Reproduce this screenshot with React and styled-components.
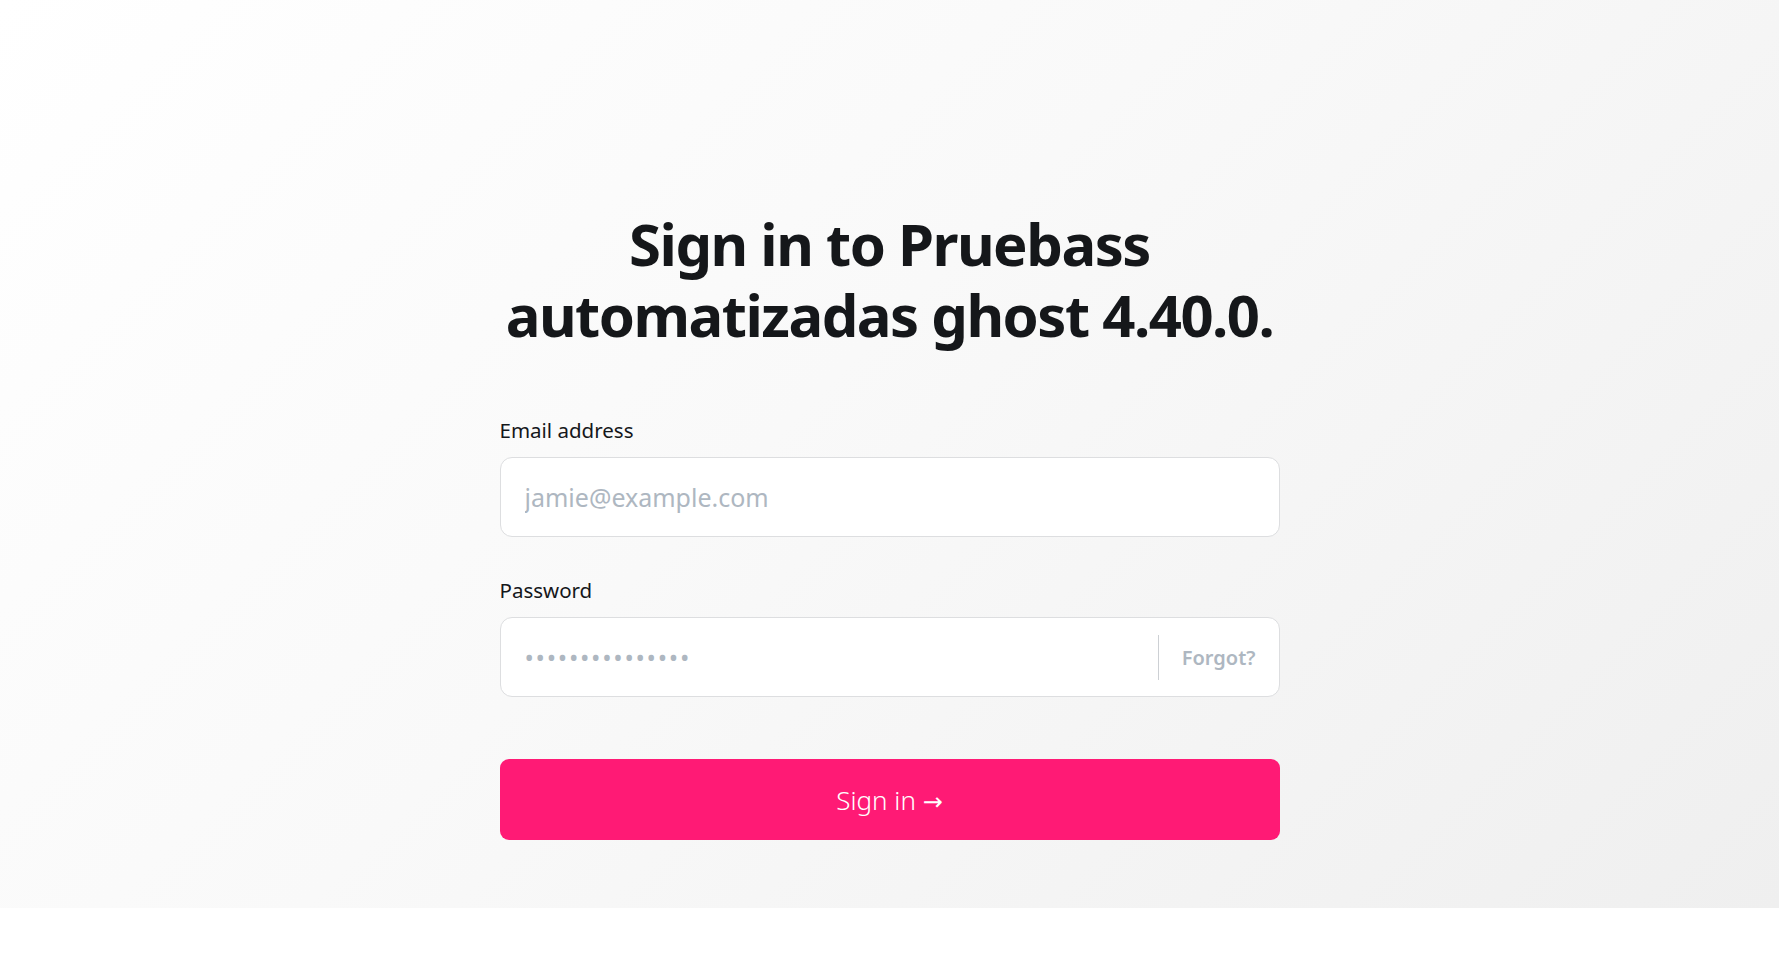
import React from "react";
import styled, { createGlobalStyle } from "styled-components";

const GlobalStyle = createGlobalStyle`
  html, body {
    margin: 0;
    padding: 0;
    background: #ffffff;
    font-family: "Noto Sans", "Open Sans", sans-serif;
    color: #15171a;
  }
  * {
    box-sizing: border-box;
  }
`;

function App() {
  return (
    <>
      <GlobalStyle />
      <Hero>
        <Form onSubmit={(e) => e.preventDefault()}>
          <Title>
            <TitleLine>Sign in to Pruebass</TitleLine>
            <TitleLine>automatizadas ghost 4.40.0.</TitleLine>
          </Title>
          <Field>
            <Label htmlFor="identification">Email address</Label>
            <InputBox>
              <Input
                id="identification"
                type="email"
                placeholder="jamie@example.com"
              />
            </InputBox>
          </Field>
          <Field>
            <Label htmlFor="password">Password</Label>
            <InputBox>
              <Input
                id="password"
                type="password"
                placeholder="•••••••••••••••"
                dots
              />
              <Forgot type="button">Forgot?</Forgot>
            </InputBox>
          </Field>
          <SubmitButton type="submit">
            Sign in <Arrow>→</Arrow>
          </SubmitButton>
        </Form>
      </Hero>
    </>
  );
}

export default App;

const Hero = styled.div`
  height: 908px;
  display: flex;
  justify-content: center;
  background: linear-gradient(135deg, #ffffff 0%, #f9f9f9 45%, #efefef 100%);
`;

const Form = styled.form`
  width: 780px;
  padding-top: 208px;
  display: flex;
  flex-direction: column;
`;

const Title = styled.h1`
  margin: 0 0 66px;
  font-size: 58px;
  line-height: 71px;
  font-weight: 700;
  letter-spacing: -1.5px;
  text-align: center;
  color: #15171a;
`;

const TitleLine = styled.span`
  display: block;
  white-space: nowrap;
`;

const Field = styled.div`
  display: flex;
  flex-direction: column;
  margin-bottom: 39px;
`;

const Label = styled.label`
  font-size: 20.5px;
  line-height: 28px;
  margin-bottom: 13px;
  color: #15171a;
`;

const InputBox = styled.div`
  height: 80px;
  display: flex;
  align-items: center;
  background: #ffffff;
  border: 1px solid #dddee0;
  border-radius: 12px;
`;

const Input = styled.input`
  flex: 1;
  height: 100%;
  border: none;
  outline: none;
  background: transparent;
  padding: 0 24px;
  font-family: "Noto Sans", "Open Sans", sans-serif;
  font-size: 25px;
  color: #15171a;
  border-radius: 12px;
  letter-spacing: ${(p) => (p.dots ? "1.7px" : "0")};

  &::placeholder {
    color: #aeb7c1;
  }
`;

const Forgot = styled.button`
  height: 45px;
  padding: 0 23px;
  border: none;
  border-left: 1px solid #cdd0d4;
  background: transparent;
  font-family: "Noto Sans", "Open Sans", sans-serif;
  font-size: 20px;
  font-weight: 600;
  color: #aeb7c1;
  cursor: pointer;
`;

const SubmitButton = styled.button`
  height: 81px;
  margin-top: 23px;
  border: none;
  border-radius: 9px;
  background: #ff1a75;
  color: #ffffff;
  font-family: "Noto Sans", "Open Sans", sans-serif;
  font-size: 26px;
  font-weight: 300;
  cursor: pointer;
`;

const Arrow = styled.span`
  font-family: "DejaVu Sans", sans-serif;
  font-size: 24px;
  font-weight: 400;
`;
